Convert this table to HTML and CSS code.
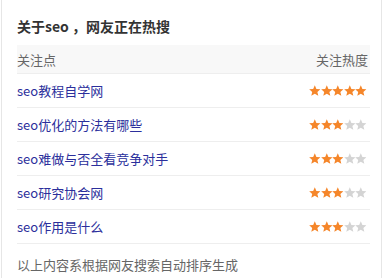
FILE: index.html
```html
<!DOCTYPE html>
<html lang="zh">
<head>
<meta charset="utf-8">
<link rel="stylesheet" href="styles.css">
</head>
<body>
<svg width="0" height="0" class="defs">
  <defs>
    <symbol id="star" viewBox="1 1 22 21">
      <path d="M12 1.5l3.1 7.1 7.6.6-5.8 5 1.8 7.5L12 17.7l-6.7 4 1.8-7.5-5.8-5 7.6-.6z"/>
    </symbol>
  </defs>
</svg>
<div class="box">
  <h3 class="title">关于seo ，网友正在热搜</h3>
  <div class="head">
    <span>关注点</span>
    <span>关注热度</span>
  </div>
  <ul class="list">
    <li class="row"><a class="link">seo教程自学网</a><span class="stars">
      <svg class="on"><use href="#star"/></svg><svg class="on"><use href="#star"/></svg><svg class="on"><use href="#star"/></svg><svg class="on"><use href="#star"/></svg><svg class="on"><use href="#star"/></svg></span></li>
    <li class="row"><a class="link">seo优化的方法有哪些</a><span class="stars">
      <svg class="on"><use href="#star"/></svg><svg class="on"><use href="#star"/></svg><svg class="on"><use href="#star"/></svg><svg class="off"><use href="#star"/></svg><svg class="off"><use href="#star"/></svg></span></li>
    <li class="row"><a class="link">seo难做与否全看竞争对手</a><span class="stars">
      <svg class="on"><use href="#star"/></svg><svg class="on"><use href="#star"/></svg><svg class="on"><use href="#star"/></svg><svg class="off"><use href="#star"/></svg><svg class="off"><use href="#star"/></svg></span></li>
    <li class="row"><a class="link">seo研究协会网</a><span class="stars">
      <svg class="on"><use href="#star"/></svg><svg class="on"><use href="#star"/></svg><svg class="on"><use href="#star"/></svg><svg class="off"><use href="#star"/></svg><svg class="off"><use href="#star"/></svg></span></li>
    <li class="row"><a class="link">seo作用是什么</a><span class="stars">
      <svg class="on"><use href="#star"/></svg><svg class="on"><use href="#star"/></svg><svg class="on"><use href="#star"/></svg><svg class="off"><use href="#star"/></svg><svg class="off"><use href="#star"/></svg></span></li>
  </ul>
  <p class="foot">以上内容系根据网友搜索自动排序生成</p>
</div>
</body>
</html>
```
FILE: styles.css
```css
html, body {
  margin: 0;
  padding: 0;
  background: #fff;
}
body {
  font-family: "Noto Sans CJK SC", "Microsoft YaHei", sans-serif;
  font-size: 13px;
  color: #333;
}
.defs {
  position: absolute;
  width: 0;
  height: 0;
}
.box {
  box-sizing: border-box;
  margin-left: 1px;
  width: 381px;
  height: 278px;
  border-left: 1px solid #e6e6e6;
  border-right: 1px solid #e6e6e6;
  padding: 0 11px 0 15px;
  overflow: hidden;
}
.title {
  margin: 0;
  padding-top: 16px;
  height: 29px;
  line-height: 20px;
  font-size: 14px;
  font-weight: bold;
  color: #333;
}
.head {
  display: flex;
  justify-content: space-between;
  align-items: center;
  height: 28px;
  background: #f8f8f8;
  border-bottom: 1px solid #eee;
  color: #666;
  padding-right: 2px;
}
.list {
  list-style: none;
  margin: 0;
  padding: 0;
}
.row {
  display: flex;
  justify-content: space-between;
  align-items: center;
  height: 33px;
  border-bottom: 1px solid #eee;
  padding-right: 3px;
}
.link {
  color: #2b2f9c;
  text-decoration: none;
}
.stars {
  display: flex;
  gap: 0;
}
.stars svg {
  width: 11.6px;
  height: 11px;
  display: block;
}
.stars .on {
  fill: #f5862a;
}
.stars .off {
  fill: #d4d4d4;
}
.foot {
  margin: 0;
  padding-top: 11px;
  line-height: 20px;
  color: #666;
}
```
